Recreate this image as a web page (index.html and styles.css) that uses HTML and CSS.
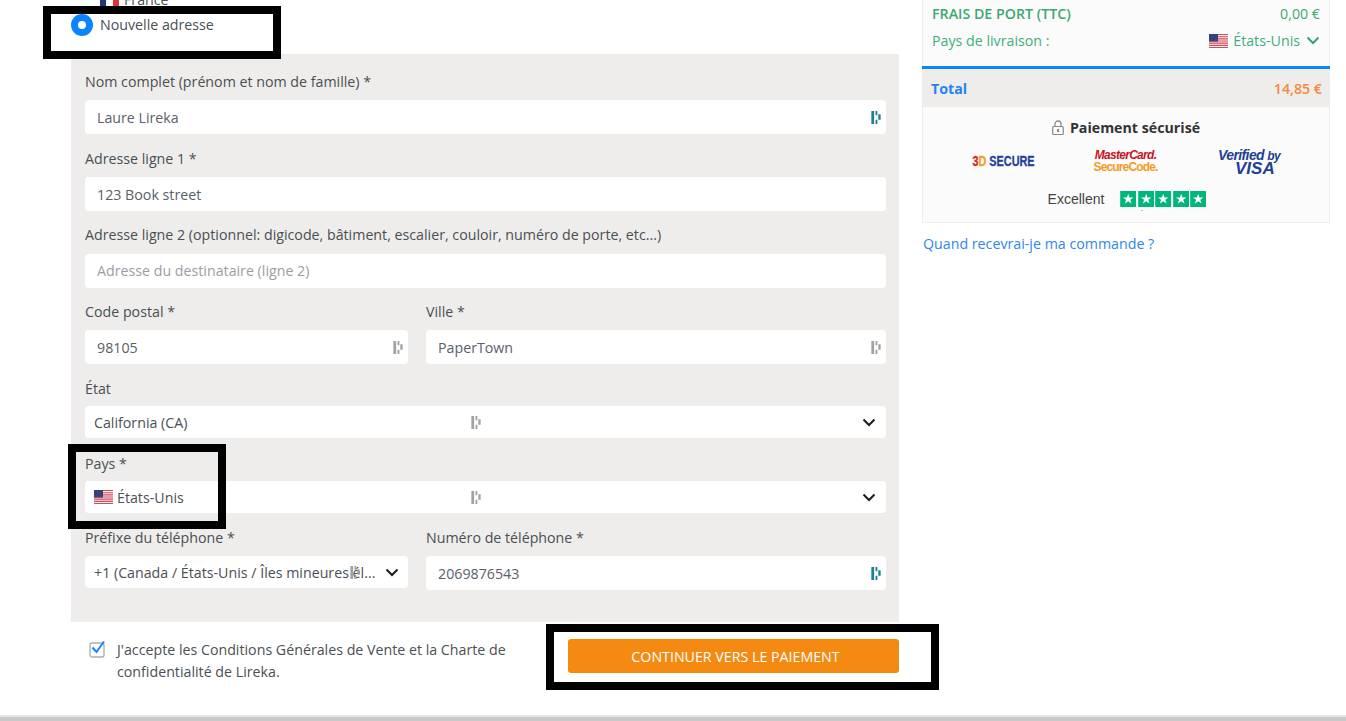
FILE: index.html
```html
<!DOCTYPE html>
<html lang="fr">
<head>
<meta charset="utf-8">
<title>Lireka</title>
<link rel="stylesheet" href="styles.css">
</head>
<body>
<svg class="defs" width="0" height="0">
  <defs>
    <symbol id="dash" viewBox="0 0 10 14">
      <path d="M0 0h3v14H0zM4.500 0h2v4.500h-2zM4.500 9.500h2v4.500h-2zM7.500 3.500h2.500v6H7.500z"/>
    </symbol>
    <symbol id="us" viewBox="0 0 19 14">
      <rect width="19" height="14" fill="#f4f2f2"/>
      <path d="M0 0h19v1.100H0zM0 2.200h19v1.100H0zM0 4.300h19v1.100H0zM0 6.500h19v1.100H0zM0 8.600h19v1.100H0zM0 10.800h19v1.100H0zM0 12.900h19V14H0z" fill="#d6485a"/>
      <rect width="9" height="7.600" fill="#39427a"/>
    </symbol>
    <symbol id="star" viewBox="0 0 16 16">
      <rect width="16" height="16" fill="#00b67a"/>
      <path d="M8 2.800l1.300 3.700h3.900l-3.100 2.300 1.200 3.800L8 10.300l-3.300 2.300 1.200-3.800-3.100-2.300h3.900z" fill="#fff"/>
    </symbol>
  </defs>
</svg>
<div class="page">
  <div class="columns">
    <main class="left">
      <div class="addr-opt france">
        <span class="fr-flag"><i></i><i></i><i></i></span>
        <span>France</span>
      </div>
      <div class="addr-opt new">
        <span class="radio"></span>
        <span class="new-text">Nouvelle adresse</span>
      </div>
      <form class="panel">
        <label class="label gap9">Nom complet (prénom et nom de famille) *</label>
        <div class="field"><span>Laure Lireka</span><svg class="dash teal"><use href="#dash"/></svg></div>
        <label class="label gap9">Adresse ligne 1 *</label>
        <div class="field gap14"><span>123 Book street</span></div>
        <label class="label gap10">Adresse ligne 2 (optionnel: digicode, bâtiment, escalier, couloir, numéro de porte, etc...)</label>
        <div class="field placeholder gap14"><span>Adresse du destinataire (ligne 2)</span></div>
        <div class="two">
          <div class="cell">
            <label class="label gap9">Code postal *</label>
            <div class="field"><span>98105</span><svg class="dash grey"><use href="#dash"/></svg></div>
          </div>
          <div class="cell">
            <label class="label gap9">Ville *</label>
            <div class="field"><span>PaperTown</span><svg class="dash grey"><use href="#dash"/></svg></div>
          </div>
        </div>
        <label class="label">État</label>
        <div class="field select gap16">
          <span>California (CA)</span>
          <svg class="dash grey mid"><use href="#dash"/></svg>
          <svg class="chev" viewBox="0 0 14 9"><path d="M1.500 1.500L7 7l5.500-5.500" fill="none" stroke="#1c1c1c" stroke-width="2"/></svg>
        </div>
        <label class="label">Pays *</label>
        <div class="field select">
          <span class="flagged"><svg class="us"><use href="#us"/></svg>États-Unis</span>
          <svg class="dash grey mid"><use href="#dash"/></svg>
          <svg class="chev" viewBox="0 0 14 9"><path d="M1.500 1.500L7 7l5.500-5.500" fill="none" stroke="#1c1c1c" stroke-width="2"/></svg>
        </div>
        <div class="two tel">
          <div class="cell">
            <label class="label gap9">Préfixe du téléphone *</label>
            <div class="field select">
              <span>+1 (Canada / États-Unis / Îles mineures él...</span>
              <svg class="dash grey mid2"><use href="#dash"/></svg>
              <svg class="chev chev-near" viewBox="0 0 14 9"><path d="M1.500 1.500L7 7l5.500-5.500" fill="none" stroke="#1c1c1c" stroke-width="2"/></svg>
            </div>
          </div>
          <div class="cell">
            <label class="label gap9">Numéro de téléphone *</label>
            <div class="field"><span>2069876543</span><svg class="dash teal"><use href="#dash"/></svg></div>
          </div>
        </div>
      </form>
      <div class="actions">
        <div class="terms">
          <svg class="check" viewBox="0 0 17 18">
            <rect x="1" y="3" width="14" height="14" rx="2" fill="#fff" stroke="#a9adb1" stroke-width="1.300"/>
            <path d="M3.500 7.500L7.500 12 15 1.500" fill="none" stroke="#1a84ee" stroke-width="2"/>
          </svg>
          <p>J'accepte les Conditions Générales de Vente et la Charte de confidentialité de Lireka.</p>
        </div>
        <button class="cta" type="button">CONTINUER VERS LE PAIEMENT</button>
      </div>
    </main>
    <aside class="right">
      <div class="summary">
        <div class="ship">
          <div class="ship-row strong"><span>FRAIS DE PORT (TTC)</span><span class="reg">0,00 €</span></div>
          <div class="ship-row"><span>Pays de livraison :</span>
            <span class="country"><svg class="us"><use href="#us"/></svg>États-Unis
              <svg class="chev-g" viewBox="0 0 14 9"><path d="M1.500 1.500L7 7l5.500-5.500" fill="none" stroke="#2ea66f" stroke-width="2"/></svg>
            </span>
          </div>
        </div>
        <div class="total"><span class="t-label">Total</span><span class="t-value">14,85 €</span></div>
        <div class="secure">
          <div class="secure-title">
            <svg class="lock" viewBox="0 0 12 15"><path d="M3 7V4a3 3 0 0 1 6 0v3" fill="none" stroke="#8b8b8b" stroke-width="1.300"/><rect x=".7" y="6.500" width="10.600" height="8" rx="1" fill="#fbfbfb" stroke="#8b8b8b" stroke-width="1.200"/><rect x="5.300" y="9" width="1.500" height="3" fill="#666"/></svg>
            <b>Paiement sécurisé</b>
          </div>
          <div class="logos">
            <div class="logo-3d"><span class="r">3</span><span class="o">D</span> SECURE</div>
            <div class="logo-mc"><span class="mc1">MasterCard.</span><span class="mc2">SecureCode.</span></div>
            <div class="logo-visa"><span class="v1">Verified <small>by</small></span><span class="v2">VISA</span></div>
          </div>
          <div class="trust">
            <span>Excellent</span>
            <span class="stars">
              <svg><use href="#star"/></svg><svg><use href="#star"/></svg><svg><use href="#star"/></svg><svg><use href="#star"/></svg><svg><use href="#star"/></svg>
            </span>
          </div>
        </div>
      </div>
      <a class="when" href="#">Quand recevrai-je ma commande ?</a>
    </aside>
  </div>
  <div class="mark mark-a"></div>
  <div class="mark mark-b"></div>
  <div class="mark mark-c"></div>
  <div class="bottom"></div>
</div>
</body>
</html>
```
FILE: styles.css
```css
* { box-sizing: border-box; }
html, body { margin: 0; padding: 0; height: 100%; background: #fff; overflow: hidden; }
body { font-family: "Open Sans", "Liberation Sans", sans-serif; font-size: 14.23px; color: #4a4f54; }
.defs { position: absolute; }
.page { position: relative; height: 721px; overflow: hidden; }
.columns { display: flex; align-items: flex-start; gap: 23px; padding-left: 71px; margin-top: -13px; }

.left { width: 828px; flex: none; }
.addr-opt { display: flex; align-items: center; color: #4a4f54; }
.france { padding-left: 29px; gap: 5px; height: 24px; }
.fr-flag { display: flex; width: 19px; height: 14px; }
.fr-flag i { flex: 1; }
.fr-flag i:nth-child(1) { background: #1f3a6e; }
.fr-flag i:nth-child(2) { background: #fff; }
.fr-flag i:nth-child(3) { background: #e2303f; }
.new { gap: 7px; margin-top: 4px; height: 20px; }
.new-text { margin-bottom: 2px; }
.radio { width: 22px; height: 22px; border-radius: 50%; border: 7px solid #0a84ff; background: #fff; flex: none; }

.panel { background: #eeedeb; margin-top: 19px; height: 568px; padding: 18px 13px 0 14px; display: flex; flex-direction: column; }
.label { display: block; line-height: 19px; height: 19px; margin-bottom: 8px; color: #4a4f54; }
.label.gap9 { margin-bottom: 9px; }
.label.gap10 { margin-bottom: 10px; }
.panel > .field { margin-bottom: 15px; }
.panel > .field.gap14 { margin-bottom: 14px; }
.panel > .field.gap16 { margin-bottom: 16px; }
.field { position: relative; background: #fff; height: 34px; border-radius: 4px; display: flex; align-items: center; padding: 0 12px; color: #5a6068; }
.placeholder { color: #9a9ea3; padding-bottom: 2px; }
.dash { position: absolute; right: 5px; top: 11px; width: 10px; height: 13px; }
.teal { fill: #1f7f92; }
.grey { fill: #a2a2a2; }
.two { display: grid; grid-template-columns: 323px 460px; gap: 18px; margin-bottom: 15px; }
.select { height: 32px; padding: 0 9px; color: #4a4f54; }
.mid { right: auto; left: 386px; top: 10px; }
.mid2 { right: auto; left: 265px; top: 10px; }
.chev { position: absolute; right: 10px; top: 12px; width: 14px; height: 9px; }
.chev-near { right: 9px; }
.flagged { display: flex; align-items: center; gap: 4px; }
.us { width: 19px; height: 14px; flex: none; }
.actions { display: flex; justify-content: space-between; align-items: flex-start; padding: 17px 0 0 18px; }
.terms { display: flex; gap: 11px; width: 420px; }
.check { width: 17px; height: 18px; flex: none; margin-top: 1px; }
.terms p { margin: 0; line-height: 22px; color: #4a4f54; }
.cta { width: 331px; height: 34px; background: #f58a12; border: 0; border-radius: 3px; color: #fff; font: 14.23px "Open Sans", "Liberation Sans", sans-serif; padding: 0 0 0 4px; }

.right { width: 408px; flex: none; }
.summary { border: 1px solid #eeeeee; border-top: 0; background: #fbfbfb; }
.ship { height: 79px; padding: 13px 9px 0 9px; color: #3fae7c; }
.ship-row { display: flex; justify-content: space-between; align-items: center; height: 27px; }
.strong { font-weight: 600; color: #3ba874; }
.reg { font-weight: 400; }
.country { display: flex; align-items: center; gap: 5px; }
.chev-g { width: 14px; height: 9px; margin-left: 1px; }
.total { height: 41px; border-top: 3px solid #0a84ff; background: #eeedeb; margin: 0 -1px; padding: 0 8px 0 9px; display: flex; justify-content: space-between; align-items: center; }
.t-label { color: #1f83f2; font-weight: 700; }
.t-value { color: #f58a3c; font-weight: 600; }
.secure { height: 115px; }
.secure-title { display: flex; justify-content: center; align-items: center; gap: 6px; padding-top: 10px; height: 30px; color: #333; }
.secure-title b { font-weight: 700; }
.lock { width: 12px; height: 15px; }
.logos { display: flex; height: 44px; align-items: center; padding-top: 4px; }
.logos > div { text-align: center; line-height: 1; }
.logo-3d { width: 159px; font: 700 14px/1 "Liberation Sans", sans-serif; color: #1f3f9c; -webkit-text-stroke: .3px currentColor; transform: translateX(1px) scaleX(.774); white-space: nowrap; }
.logo-3d .r { color: #d8232a; }
.logo-3d .o { color: #f0a020; }
.logo-mc { width: 87px; display: flex; flex-direction: column; font: italic 700 12px/11px "Liberation Sans", sans-serif; letter-spacing: -.7px; white-space: nowrap; }
.mc1 { color: #c8141e; }
.mc2 { color: #f59a1e; font-style: normal; letter-spacing: -.85px; }
.logo-visa { width: 116px; padding-left: 49px; display: flex; flex-direction: column; align-items: flex-start; font: italic 700 14px/13px "Liberation Sans", sans-serif; color: #1e3f96; white-space: nowrap; letter-spacing: -.6px; }
.logo-visa small { font-size: 12px; font-weight: 700; }
.v2 { font-size: 17px; line-height: 13px; letter-spacing: 0; margin-left: 17px; }
.trust { display: flex; justify-content: center; align-items: center; gap: 16px; height: 26px; padding: 10px 0 0 2px; font: 14px "Liberation Sans", sans-serif; color: #444; }
.stars { position: relative; display: flex; gap: 1px; }
.stars svg { width: 16.400px; height: 16px; display: block; }
.stars::after { content: ""; position: absolute; left: 21px; top: 19px; width: 2px; height: 1px; background: #7ed3b0; }
.when { display: block; margin-top: 11px; padding-left: 1px; color: #2f86f0; text-decoration: none; line-height: 20px; }

.mark { position: absolute; border: 8px solid #000; pointer-events: none; }
.mark-a { left: 43px; top: 6px; width: 238px; height: 53px; }
.mark-b { left: 68px; top: 444px; width: 158px; height: 85px; }
.mark-c { left: 546px; top: 624px; width: 393px; height: 66px; }
.bottom { position: absolute; left: 0; right: 0; bottom: 0; height: 6px; border-top: 2px solid #e6e6e6; background: #c8c8c8; }
```
